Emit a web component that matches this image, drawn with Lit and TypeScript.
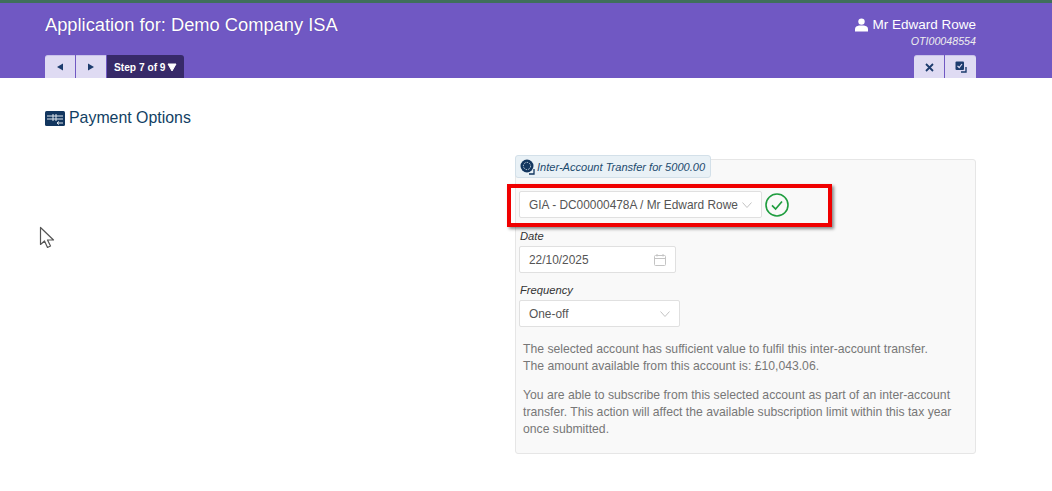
import { LitElement, html, css } from "lit";
import { customElement } from "lit/decorators.js";

@customElement("app-root")
export class AppRoot extends LitElement {
  static styles = css`
    :host { display: block; width: 1052px; height: 491px; position: relative; overflow: hidden; background: #fff; font-family: "Liberation Sans", Arial, sans-serif; color: #555; }
    * { box-sizing: border-box; }
    .header { height: 78px; background: #7058c3; border-top: 3px solid #3f6f5a; padding: 0 76px 0 45px; display: flex; flex-direction: column; justify-content: space-between; color: #fff; }
    .top { display: flex; justify-content: space-between; align-items: flex-start; }
    h1 { margin: 11px 0 0; font-size: 18.3px; line-height: 22px; font-weight: 400; text-shadow: 0 0 1px rgba(60,40,120,.6); }
    .user { margin-top: 13px; text-align: right; }
    .name { font-size: 13.5px; line-height: 18px; display: flex; justify-content: flex-end; align-items: center; gap: 4px; }
    .oti { font-size: 10.7px; font-style: italic; line-height: 14px; color: #eee; }
    .tools { display: flex; justify-content: space-between; align-items: flex-end; }
    .group { display: flex; gap: 1px; }
    .btn { width: 31px; height: 23px; background: #dfdbf3; display: flex; align-items: center; justify-content: center; border-top: 1px solid #c9c2ea; }
    .nav { width: 30px; }
    .btn.first { border-top-left-radius: 3px; }
    .btn.last { border-top-right-radius: 3px; }
    .step { height: 23px; width: 77px; background: #372a69; color: #fff; font-size: 10.2px; font-weight: 700; display: flex; align-items: center; padding: 1px 0 0 7px; gap: 1px; border-top-right-radius: 3px; }
    .title { display: flex; align-items: center; gap: 4px; margin: 30px 0 0 45px; height: 20px; color: #123f64; font-size: 15.9px; }
    .main { display: grid; grid-template-columns: 1fr 461px; padding: 0 76px 0 45px; margin-top: 31px; }
    .panel { position: relative; height: 295px; background: #f9f9f9; border: 1px solid #e6e6e6; border-radius: 3px; padding: 31px 3px 0 3px; }
    .badge { position: absolute; left: -1px; top: -5px; height: 23px; width: 196px; display: flex; align-items: center; gap: 2px; padding-left: 4px; background: #e9f1f6; border: 1px solid #d3e0e9; border-radius: 3px; color: #1c4a6e; font-size: 11.07px; font-style: italic; white-space: nowrap; }
    .acct { display: flex; align-items: center; gap: 3px; height: 27px; }
    .field { background: #fff; border: 1px solid #e0e0e0; border-radius: 2px; height: 27px; display: flex; align-items: center; justify-content: space-between; padding: 0 9px; font-size: 11.9px; color: #555; white-space: nowrap; }
    .w1 { width: 243px; } .w2 { width: 157px; } .w3 { width: 161px; }
    label { display: block; font-size: 11.2px; font-style: italic; color: #333; line-height: 14px; margin-left: 1px; }
    .l1 { margin-top: 11px; margin-bottom: 3px; } .l2 { margin-top: 10px; margin-bottom: 3px; }
    .text { margin: 14px 0 0 4px; width: 440px; font-size: 12.2px; line-height: 17px; color: #777; }
    .text p { margin: 0 0 12px; }
    .redbox { position: absolute; left: -9px; top: 24px; width: 325px; height: 43px; border: 4px solid #f00000; box-shadow: 2px 2px 3px rgba(0,0,0,.45); pointer-events: none; }
    .cursor { position: absolute; left: 39px; top: 226px; }
  `;

  render() {
    const chev = html`<svg width="10" height="6" viewBox="0 0 10 6"><path d="M.5.5 5 5.5 9.5.5" fill="none" stroke="#c4c4c4"/></svg>`;
    return html`
      <div class="header">
        <div class="top">
          <h1>Application for: Demo Company ISA</h1>
          <div class="user">
            <div class="name">
              <svg width="13" height="14" viewBox="0 0 13 14"><circle cx="6.5" cy="3.6" r="3.2" fill="#fff"/><path d="M0 13.5V11c0-2 2-3 4-3.4h5c2 .4 4 1.4 4 3.4v2.5z" fill="#fff"/></svg>
              <span>Mr Edward Rowe</span>
            </div>
            <div class="oti">OTI00048554</div>
          </div>
        </div>
        <div class="tools">
          <div class="group">
            <div class="btn first nav"><svg width="8" height="8" viewBox="0 0 8 8"><path d="M7 .5v7L1 4z" fill="#1d3c6e"/></svg></div>
            <div class="btn nav"><svg width="8" height="8" viewBox="0 0 8 8"><path d="M1 .5v7L7 4z" fill="#1d3c6e"/></svg></div>
            <div class="step"><span>Step 7 of 9</span><svg width="10" height="9" viewBox="0 0 10 9"><path d="M1 1h8L5 8z" fill="#fff" stroke="#fff" stroke-linejoin="round"/></svg></div>
          </div>
          <div class="group">
            <div class="btn first nav"><svg width="9" height="9" viewBox="0 0 9 9"><path d="M1 1l7 7M8 1 1 8" stroke="#1d3c6e" stroke-width="1.8"/></svg></div>
            <div class="btn last"><svg width="12" height="12" viewBox="0 0 12 12"><rect x="0.5" y="0.5" width="8.5" height="8.5" rx="1" fill="#1d3c6e"/><path d="M2.5 4.8 4.2 6.5 7 3" fill="none" stroke="#dfdbf3" stroke-width="1.2"/><path d="M11 6v5H6" fill="none" stroke="#1d3c6e" stroke-width="1.4"/></svg></div>
          </div>
        </div>
      </div>
      <div class="title">
        <svg width="20" height="15" viewBox="0 0 20 15"><rect width="20" height="15" rx="1.5" fill="#12365f"/><path d="M2 5h16M2 8h16" stroke="#dfe6ee" stroke-width="1"/><path d="M8 3v7M11 3v7" stroke="#dfe6ee" stroke-width="1"/><path d="M12 12h6M14 10.5l-2 1.5 2 1.5" fill="none" stroke="#dfe6ee" stroke-width="1"/></svg>
        <span>Payment Options</span>
      </div>
      <div class="main">
        <div></div>
        <div class="panel">
          <div class="badge">
            <svg width="15" height="16" viewBox="0 0 15 16"><circle cx="7" cy="7" r="6.5" fill="#12365f"/><circle cx="7" cy="7" r="3.6" fill="none" stroke="#cfdbe6" stroke-width="1" stroke-dasharray="1.5 1.2"/><path d="M14 10v5H9" fill="none" stroke="#12365f" stroke-width="1.3"/></svg>
            <span>Inter-Account Transfer for 5000.00</span>
          </div>
          <div class="acct">
            <div class="field w1"><span>GIA - DC00000478A / Mr Edward Rowe</span>${chev}</div>
            <svg width="24" height="24" viewBox="0 0 24 24"><circle cx="12" cy="12" r="11" fill="none" stroke="#1f9d3f" stroke-width="1.6"/><path d="M7 12.3 10.6 16 17 8.5" fill="none" stroke="#1f9d3f" stroke-width="1.7"/></svg>
          </div>
          <label class="l1">Date</label>
          <div class="field w2"><span>22/10/2025</span>
            <svg width="12" height="12" viewBox="0 0 12 12"><rect x=".5" y="1.5" width="11" height="10" rx="1" fill="none" stroke="#c4c4c4"/><path d="M.5 4.5h11M3 0v2.5M9 0v2.5" fill="none" stroke="#c4c4c4"/></svg>
          </div>
          <label class="l2">Frequency</label>
          <div class="field w3"><span>One-off</span>${chev}</div>
          <div class="text">
            <p>The selected account has sufficient value to fulfil this inter-account transfer.<br>The amount available from this account is: £10,043.06.</p>
            <p>You are able to subscribe from this selected account as part of an inter-account transfer. This action will affect the available subscription limit within this tax year once submitted.</p>
          </div>
          <div class="redbox"></div>
        </div>
      </div>
      <svg class="cursor" width="18" height="24" viewBox="0 0 18 24"><path d="M1.5 1.5v17l4-3.5 3 6.5 3-1.5-3-6h6z" fill="#fff" stroke="#555" stroke-width="1.2" stroke-linejoin="round"/></svg>
    `;
  }
}
